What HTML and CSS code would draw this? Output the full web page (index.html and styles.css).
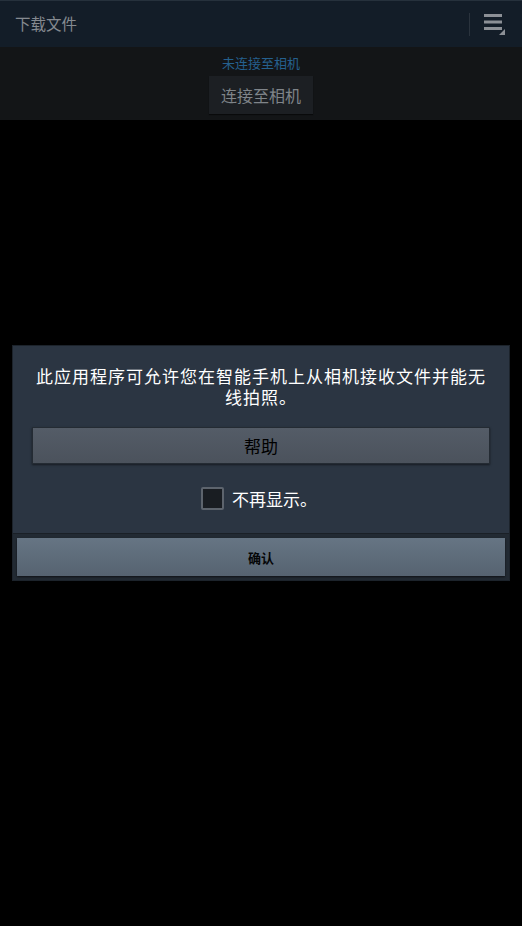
FILE: index.html
```html
<!DOCTYPE html>
<html lang="zh">
<head>
<meta charset="utf-8">
<link rel="stylesheet" href="styles.css">
</head>
<body>
<div class="screen">
  <header class="topbar">
    <div class="title">下载文件</div>
    <div class="actions">
      <span class="divider"></span>
      <svg class="menu" width="26" height="26" viewBox="0 0 26 26">
        <rect x="3" y="2" width="18" height="3" fill="#8c9096"/>
        <rect x="3" y="8.5" width="18" height="3" fill="#8c9096"/>
        <rect x="3" y="15" width="18" height="3" fill="#8c9096"/>
        <polygon points="24,17 24,23 18,23" fill="#8c9096"/>
      </svg>
    </div>
  </header>
  <section class="status">
    <div class="status-text">未连接至相机</div>
    <div class="connect">连接至相机</div>
  </section>
  <main class="stage">
    <div class="dialog">
      <div class="dialog-body">
        <p class="message">此应用程序可允许您在智能手机上从相机接收文件并能无线拍照。</p>
        <div class="help">帮助</div>
        <label class="check-row"><span class="checkbox"></span><span>不再显示。</span></label>
      </div>
      <div class="dialog-footer">
        <div class="ok">确认</div>
      </div>
    </div>
  </main>
</div>
</body>
</html>
```
FILE: styles.css
```css
html, body {
  margin: 0;
  padding: 0;
  background: #000;
}
.screen {
  width: 522px;
  height: 926px;
  display: flex;
  flex-direction: column;
  font-family: "Noto Sans CJK SC", "Noto Sans", sans-serif;
  background: #000;
}
.topbar {
  height: 47px;
  box-sizing: border-box;
  background: #131d28;
  border-top: 1px solid #26313c;
  display: flex;
  align-items: center;
  justify-content: space-between;
  padding: 0 15px 0 15px;
}
.title {
  color: #858a90;
  font-size: 15.5px;
  line-height: 1;
}
.actions {
  display: flex;
  align-items: center;
  gap: 11px;
}
.divider {
  width: 1px;
  height: 23px;
  background: #2a333d;
}
.menu {
  display: block;
  margin-top: 2px;
}
.status {
  height: 73px;
  background: #131517;
  display: flex;
  flex-direction: column;
  align-items: center;
  padding-top: 8px;
  box-sizing: border-box;
}
.status-text {
  color: #25608e;
  font-size: 13px;
  line-height: 16px;
}
.connect {
  margin-top: 5px;
  width: 104px;
  height: 38px;
  background: #1c1f23;
  color: #7f8489;
  font-size: 16px;
  display: flex;
  align-items: center;
  justify-content: center;
  box-shadow: 0 1px 1px rgba(0,0,0,0.5);
}
.stage {
  flex: 1;
  display: flex;
  justify-content: center;
  padding-top: 225px;
}
.dialog {
  width: 498px;
  height: 236px;
  box-sizing: border-box;
  background: #2b3542;
  border: 1px solid #1c232b;
  display: flex;
  flex-direction: column;
}
.dialog-body {
  flex: 1;
  display: flex;
  flex-direction: column;
  align-items: center;
  padding: 19px 19px 0;
}
.message {
  margin: 0;
  color: #ffffff;
  font-size: 17px;
  letter-spacing: 1px;
  line-height: 21px;
  text-align: center;
}
.help {
  margin-top: 20px;
  width: 458px;
  height: 37px;
  box-sizing: border-box;
  border: 1px solid #242b33;
  background: linear-gradient(#545c67, #4b525c);
  box-shadow: 0 1px 2px rgba(0,0,0,0.5);
  color: #000;
  font-size: 17px;
  display: flex;
  align-items: center;
  justify-content: center;
}
.check-row {
  margin-top: 22px;
  display: flex;
  align-items: center;
  gap: 8px;
  color: #ffffff;
  font-size: 17px;
  margin-right: 4px;
}
.checkbox {
  width: 19px;
  height: 19px;
  background: #191d22;
  border: 2px solid #5d646d;
  border-radius: 2px;
}
.dialog-footer {
  height: 47px;
  box-sizing: border-box;
  background: #222a33;
  border-top: 1px solid #1a2027;
  padding: 4px;
  display: flex;
}
.ok {
  flex: 1;
  background: linear-gradient(#667584, #566371);
  box-shadow: 0 1px 2px rgba(0,0,0,0.6);
  color: #050607;
  font-size: 13px;
  font-weight: bold;
  display: flex;
  align-items: center;
  justify-content: center;
}
```
